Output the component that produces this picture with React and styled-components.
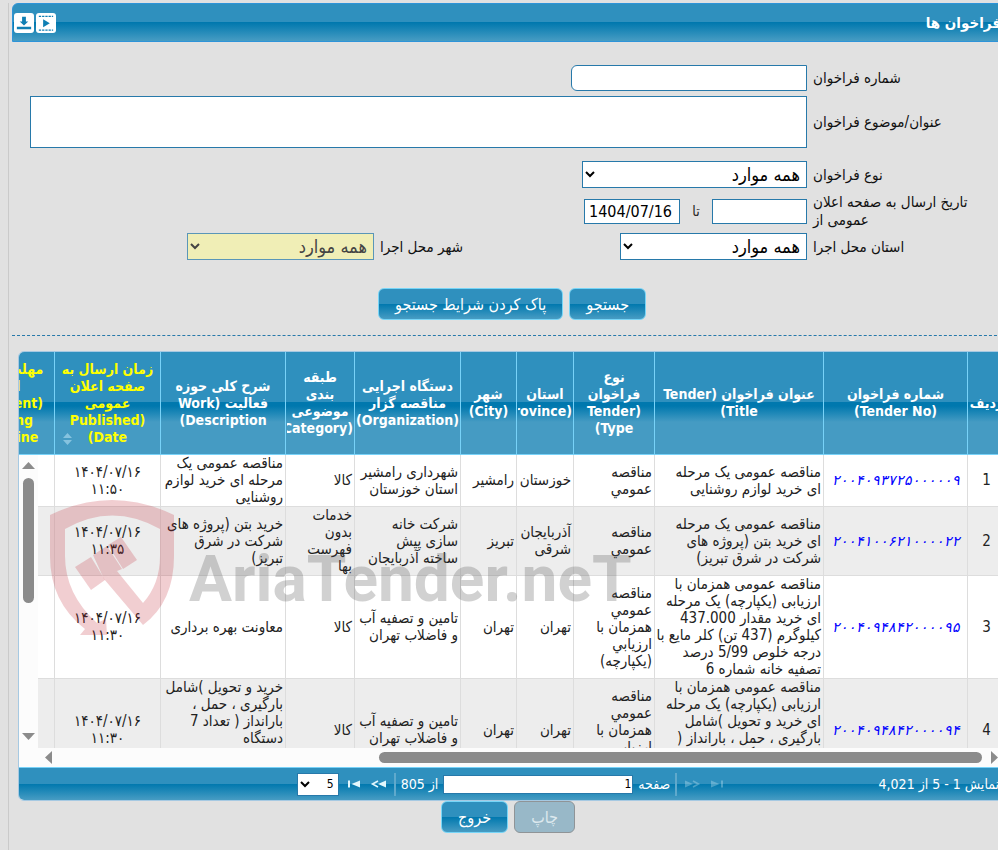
// App.jsx
import React from 'react';
import styled, { createGlobalStyle, css } from 'styled-components';

const GlobalStyle = createGlobalStyle`
  *, *::before, *::after {
    box-sizing: border-box;
  }

  body {
    margin: 0;
    overflow: hidden;
    background: #e1e1e1;
    color: #222;
    font-family: Tahoma, 'DejaVu Sans Condensed', 'DejaVu Sans', sans-serif;
    font-size: 14px;
    line-height: 18px;
  }

  button, input, select, textarea {
    font-family: inherit;
  }
`;

const gloss = 'linear-gradient(#2f90be 0, #2f90be 50%, #0078ae 50%, #479cc3 100%)';

const Frame = styled.main`
  min-height: 100vh;
  margin: 3px -14px 0 8px;
  padding-left: 3px;
  border-left: 1px solid #cacaca;
`;

const TitleBar = styled.header`
  display: flex;
  align-items: center;
  justify-content: space-between;
  height: 39px;
  padding: 0 10px 0 1px;
  border: 1px solid #2e94d9;
  border-radius: 6px 6px 0 0;
  background: ${gloss};
`;

const Title = styled.h1`
  margin: 0;
  color: #fff;
  font-size: 15px;
  line-height: 32px;
`;

const TitleTools = styled.div`
  display: flex;
  gap: 2px;
`;

const ToolButton = styled.button`
  width: 20px;
  height: 20px;
  padding: 0;
  border: 0;
  border-radius: 3px;
  background: #fff;
  line-height: 0;
  cursor: pointer;
`;

const Form = styled.form`
  display: flex;
  flex-direction: column;
  padding: 23px 30px 0 18px;
`;

const FormRow = styled.div`
  display: flex;
  align-items: center;
  min-height: ${({ $height }) => $height || 26}px;
  margin-bottom: ${({ $gap }) => $gap || 5}px;
`;

const Label = styled.label`
  flex: none;
  width: ${({ $width }) => $width || 175}px;
  padding-left: 6px;
  color: #111;
  font-size: 15px;
  text-align: left;
  white-space: pre;
`;

const fieldBox = css`
  margin: 0;
  border: 1px solid #2779aa;
  border-radius: 0;
  background: #fff;
  color: #000;
`;

const TextField = styled.input`
  ${fieldBox}
  width: ${({ $width }) => $width}px;
  height: ${({ $height }) => $height || 26}px;
  padding: 0 4px;
  border-radius: ${({ $rounded }) => ($rounded ? '6px 0 0 6px' : 0)};
  font-size: 16px;
`;

const TextArea = styled.textarea`
  ${fieldBox}
  flex: 1;
  height: 52px;
  resize: none;
`;

const Select = styled.select`
  ${fieldBox}
  width: ${({ $width }) => $width}px;
  height: 27px;
  padding: 0 2px;
  font-size: 18px;

  &:disabled {
    border-color: #5a96b8;
    background: #f0eeb6;
    color: #444;
    opacity: 1;
  }
`;

const Separator = styled.span`
  width: 32px;
  text-align: center;
`;

const Buttons = styled.div`
  display: flex;
  justify-content: center;
  gap: 6px;
`;

const Button = styled.button`
  height: 32px;
  padding: 0 16px;
  border: 1px solid #77d5f7;
  border-radius: 6px;
  background: ${gloss};
  color: #fff;
  font-size: 16px;
  cursor: pointer;

  &:disabled {
    border-color: #8f9497;
    background: #98b8c8;
    color: #dce8ee;
    cursor: default;
  }
`;

const SearchButtons = styled(Buttons)`
  margin: 23px 0 15px;
  padding-left: 12px;
`;

const Divider = styled.hr`
  margin: 0;
  border: 0;
  border-top: 1px dashed #2779aa;
`;

const Grid = styled.section`
  position: relative;
  margin: 15px 6px 0 6px;
  border: 1px solid #a6c9e2;
  border-radius: 6px;
  background: #fcfdfd;
  overflow: hidden;
`;

const TableClip = styled.div`
  position: relative;
  height: 396px;
  overflow: hidden;
`;

const Table = styled.table`
  width: 1052px;
  table-layout: fixed;
  border-collapse: separate;
  border-spacing: 0;
  line-height: 17px;
`;

const HeadCell = styled.th`
  position: relative;
  height: 103px;
  padding: 0 1px;
  border-left: 1px solid #78d2f8;
  border-bottom: 1px solid #78d2f8;
  background: linear-gradient(#2f90be 0, #2f90be 50px, #0078ae 50px, #0078ae 54px, #459bc3 70px);
  color: ${({ $sortable }) => ($sortable ? '#ff0' : '#fff')};
  font-size: 14px;
  text-align: center;
`;

const HeadText = styled.div`
  overflow: hidden;
  white-space: pre;
`;

const SortIcon = styled.svg`
  position: absolute;
  left: 7px;
  bottom: 8px;
`;

const Row = styled.tr`
  background: ${({ $even }) => ($even ? '#ededed' : '#fff')};
`;

const Cell = styled.td`
  padding: 0 2px;
  border-left: 1px solid #ddd;
  border-bottom: 1px solid #ddd;
  font-size: 15px;
  text-align: ${({ $center }) => ($center ? 'center' : 'right')};
  white-space: pre;
  overflow: hidden;
`;

const TenderLink = styled.a`
  color: #00f;
  font-size: 14px;
  font-style: italic;
  text-decoration: none;
`;

const VerticalBar = styled.div`
  position: absolute;
  left: 0;
  top: 103px;
  bottom: 0;
  width: 19px;
  display: flex;
  flex-direction: column;
  align-items: center;
  padding: 7px 0 8px;
  background: #fcfcfc;
`;

const VerticalTrack = styled.div`
  flex: 1;
  width: 11px;
  padding-top: 9px;
`;

const VerticalThumb = styled.div`
  height: 49%;
  border-radius: 6px;
  background: #8b8b8b;
`;

const HorizontalBar = styled.div`
  display: flex;
  align-items: center;
  justify-content: space-between;
  height: 19px;
  padding: 0 7px 0 26px;
  background: #fcfcfc;
`;

const HorizontalTrack = styled.div`
  flex: 1;
  padding: 0 9px;
`;

const HorizontalThumb = styled.div`
  width: 65.5%;
  height: 11px;
  border-radius: 6px;
  background: #8b8b8b;
`;

const Watermark = styled.svg`
  position: absolute;
  left: 30px;
  top: 142px;
  pointer-events: none;
`;

const Pager = styled.footer`
  display: grid;
  grid-template-columns: 1fr auto 1fr;
  align-items: center;
  height: 33px;
  padding: 0 6px;
  border-top: 1px solid #78d2f8;
  background: ${gloss};
  color: #fff;
`;

const PagerControls = styled.div`
  display: flex;
  align-items: center;
  gap: 5px;
`;

const PagerButton = styled.button`
  width: 20px;
  height: 20px;
  padding: 0;
  border: 0;
  background: none;
  line-height: 0;
  opacity: ${({ disabled }) => (disabled ? 0.3 : 1)};
`;

const PagerRule = styled.span`
  width: 2px;
  height: 23px;
  background: #5fa9cc;
`;

const PageInput = styled.input`
  ${fieldBox}
  width: 190px;
  height: 19px;
  padding: 0 1px;
  font-size: 12px;
`;

const PageSize = styled.select`
  ${fieldBox}
  width: 42px;
  height: 23px;
  font-size: 12px;
`;

const FooterButtons = styled(Buttons)`
  padding-left: 0;
  padding-right: 8px;
`;

const columns = [
  { key: 'index', title: 'ردیف', width: 38 },
  { key: 'number', title: 'شماره فراخوان\n(Tender No)', width: 144 },
  { key: 'title', title: 'عنوان فراخوان (Tender\nTitle)', width: 169 },
  { key: 'type', title: 'نوع\nفراخوان\n(Tender\nType)', width: 81 },
  { key: 'province', title: 'استان\n(Province)', width: 57 },
  { key: 'city', title: 'شهر\n(City)', width: 56 },
  { key: 'organization', title: 'دستگاه اجرایی\nمناقصه گزار\n(Organization)', width: 106 },
  { key: 'category', title: 'طبقه\nبندی\nموضوعی\n(Category)', width: 69 },
  { key: 'work', title: 'شرح کلی حوزه\nفعالیت (Work\nDescription)', width: 125 },
  { key: 'published', title: 'زمان ارسال به\nصفحه اعلان\nعمومی\n(Published\nDate)', width: 106, sortable: true },
  { key: 'deadline', title: 'مهلت ارسال\nاسناد\n(Document\nSending\nDeadline)', width: 101, sortable: true },
];

const centered = ['index', 'number', 'published', 'deadline'];

const rows = [
  {
    index: '1',
    number: '۲۰۰۴۰۹۳۷۲۵۰۰۰۰۰۹',
    title: 'مناقصه عمومی یک مرحله\nای خرید لوازم روشنایی',
    type: 'مناقصه\nعمومي',
    province: 'خوزستان',
    city: 'رامشیر',
    organization: 'شهرداری رامشیر\nاستان خوزستان',
    category: 'کالا',
    work: 'مناقصه عمومی یک\nمرحله ای خرید لوازم\nروشنایی',
    published: '۱۴۰۴/۰۷/۱۶\n۱۱:۵۰',
    deadline: '۱۴۰۴/۰۷/۲۳\n۱۴:۰۰',
  },
  {
    index: '2',
    number: '۲۰۰۴۱۰۰۶۲۱۰۰۰۰۲۲',
    title: 'مناقصه عمومی یک مرحله\nای خرید بتن (پروژه های\nشرکت در شرق تبریز)',
    type: 'مناقصه\nعمومي',
    province: 'آذربایجان\nشرقی',
    city: 'تبریز',
    organization: 'شرکت خانه\nسازی پیش\nساخته آذربایجان',
    category: 'خدمات\nبدون\nفهرست\nبها',
    work: 'خرید بتن (پروژه های\nشرکت در شرق\nتبریز)',
    published: '۱۴۰۴/۰۷/۱۶\n۱۱:۳۵',
    deadline: '۱۴۰۴/۰۷/۲۰\n۱۴:۰۰',
  },
  {
    index: '3',
    number: '۲۰۰۴۰۹۴۸۴۲۰۰۰۰۹۵',
    title:
      'مناقصه عمومی همزمان با\nارزیابی (یکپارچه) یک مرحله\nای خرید مقدار 437.000\nکیلوگرم (437 تن) کلر مایع با\nدرجه خلوص 5/99 درصد\nتصفیه خانه شماره 6',
    type: 'مناقصه\nعمومي\nهمزمان با\nارزيابي\n(يكپارچه)',
    province: 'تهران',
    city: 'تهران',
    organization: 'تامین و تصفیه آب\nو فاضلاب تهران',
    category: 'کالا',
    work: 'معاونت بهره برداری',
    published: '۱۴۰۴/۰۷/۱۶\n۱۱:۳۰',
    deadline: '۱۴۰۴/۰۷/۲۶\n۱۴:۰۰',
  },
  {
    index: '4',
    number: '۲۰۰۴۰۹۴۸۴۲۰۰۰۰۹۴',
    title:
      'مناقصه عمومی همزمان با\nارزیابی (یکپارچه) یک مرحله\nای خرید و تحویل )شامل\nبارگیری ، حمل ، بارانداز (\nتعداد 7 دستگاه\nالکتروپمپ',
    type: 'مناقصه\nعمومي\nهمزمان با\nارزيابي\n(يكپارچه)',
    province: 'تهران',
    city: 'تهران',
    organization: 'تامین و تصفیه آب\nو فاضلاب تهران',
    category: 'کالا',
    work: 'خرید و تحویل )شامل\nبارگیری ، حمل ،\nبارانداز ( تعداد 7\nدستگاه\nالکتروپمپ\nشناور',
    published: '۱۴۰۴/۰۷/۱۶\n۱۱:۳۰',
    deadline: '۱۴۰۴/۰۷/۲۳\n۱۴:۰۰',
  },
];

const Arrow = ({ points, width, height }) => (
  <svg width={width} height={height} viewBox={`0 0 ${width} ${height}`}>
    <polygon points={points} fill="#8b8b8b" />
  </svg>
);

const PagerIcon = ({ double, flip }) => (
  <svg width="20" height="20" viewBox="0 0 20 20">
    <g transform={flip ? 'translate(20 0) scale(-1 1)' : undefined}>
      {double ? (
        <>
          <path d="M9 7 L3.5 10 L9 13" fill="none" stroke="#e2f7fd" strokeWidth="1.6" />
          <path d="M17 6.5 V13.5 L9 10 Z" fill="#e2f7fd" />
        </>
      ) : (
        <>
          <path d="M4 6.5 H6 V13.5 H4 Z" fill="#e2f7fd" />
          <path d="M16 6.5 V13.5 L7.5 10 Z" fill="#e2f7fd" />
        </>
      )}
    </g>
  </svg>
);

// shield with a gavel, then the site name
const BrandMark = () => (
  <Watermark width="640" height="150" viewBox="0 0 640 150" aria-hidden="true">
    <g fill="#c0202c" fillOpacity="0.22">
      <path d="M1 21 Q63 -9 125 21 V62 Q125 108 94 131 L55 85 L68 77 L94 109 Q111 90 111 62 V35 Q63 8 16 35 V62 Q16 100 48 129 L57 125 L58 141 L31 141 L36 135 Q1 108 1 62 Z" />
      <path d="M26 73 L42 63 L56 86 L42 96 Z" />
      <path d="M44 61 L58 52 L73 75 L68 77 L55 85 Z" />
      <path d="M59 51 L72 43 L88 66 L74 75 Z" />
    </g>
    <text
      x="140"
      y="107"
      direction="ltr"
      fill="#555"
      fillOpacity="0.27"
      fontFamily="Roboto, sans-serif"
      fontSize="64"
      fontWeight="700"
    >
      AriaTender.neT
    </text>
  </Watermark>
);

const SearchForm = () => (
  <Form onSubmit={(e) => e.preventDefault()}>
    <FormRow>
      <Label htmlFor="number">شماره فراخوان</Label>
      <TextField id="number" $width={236} $rounded />
    </FormRow>
    <FormRow $height={52} $gap={13}>
      <Label htmlFor="subject">عنوان/موضوع فراخوان</Label>
      <TextArea id="subject" />
    </FormRow>
    <FormRow>
      <Label htmlFor="type">نوع فراخوان</Label>
      <Select id="type" $width={225}>
        <option>همه موارد</option>
      </Select>
    </FormRow>
    <FormRow $height={36} $gap={4}>
      <Label htmlFor="from">{'تاریخ ارسال به صفحه اعلان\nعمومی از'}</Label>
      <TextField id="from" $width={95} $height={25} />
      <Separator as="label" htmlFor="to">تا</Separator>
      <TextField id="to" dir="ltr" defaultValue="1404/07/16" $width={96} $height={25} />
    </FormRow>
    <FormRow>
      <Label htmlFor="province">استان محل اجرا</Label>
      <Select id="province" $width={187}>
        <option>همه موارد</option>
      </Select>
      <Label htmlFor="city" $width={246}>شهر محل اجرا</Label>
      <Select id="city" $width={187} disabled>
        <option>همه موارد</option>
      </Select>
    </FormRow>
    <SearchButtons>
      <Button type="submit">جستجو</Button>
      <Button type="reset">پاک کردن شرایط جستجو</Button>
    </SearchButtons>
  </Form>
);

const TenderTable = () => (
  <Table>
    <colgroup>
      {columns.map((col) => (
        <col key={col.key} width={col.width} />
      ))}
    </colgroup>
    <thead>
      <tr>
        {columns.map((col) => (
          <HeadCell key={col.key} $sortable={col.sortable}>
            <HeadText>{col.title}</HeadText>
            {col.sortable && (
              <SortIcon width="11" height="14" viewBox="0 0 11 14">
                <path d="M1 6 L5.5 1 L10 6 Z M1 8 L5.5 13 L10 8 Z" fill="#86c3df" />
              </SortIcon>
            )}
          </HeadCell>
        ))}
      </tr>
    </thead>
    <tbody>
      {rows.map((row, i) => (
        <Row key={row.number} $even={i % 2 === 1}>
          {columns.map(({ key }) => (
            <Cell key={key} $center={centered.includes(key)}>
              {key === 'number' ? <TenderLink href="#tender">{row[key]}</TenderLink> : row[key]}
            </Cell>
          ))}
        </Row>
      ))}
    </tbody>
  </Table>
);

const App = () => {
  return (
    <>
      <GlobalStyle />
      <Frame dir="rtl">
        <TitleBar>
          <Title>فراخوان ها</Title>
          <TitleTools>
            <ToolButton aria-label="نمایش">
              <svg width="20" height="20" viewBox="0 0 21 21">
                <path d="M3 3.5 H18 M3 18 H18" stroke="#0f7fb4" strokeWidth="1.4" strokeDasharray="2.4 1" />
                <path d="M7.5 6.5 V15 L14.5 10.7 Z" fill="#0f7fb4" />
              </svg>
            </ToolButton>
            <ToolButton aria-label="دریافت">
              <svg width="20" height="20" viewBox="0 0 21 21">
                <path d="M8.5 4 H12.5 V9 H15 L10.5 13 L6 9 H8.5 Z M3 14.5 H18 V17 H3 Z" fill="#0f7fb4" />
              </svg>
            </ToolButton>
          </TitleTools>
        </TitleBar>

        <SearchForm />
        <Divider />

        <Grid>
          <TableClip>
            <TenderTable />
            <VerticalBar>
              <Arrow width={13} height={7} points="0,7 13,7 6.5,0" />
              <VerticalTrack>
                <VerticalThumb />
              </VerticalTrack>
              <Arrow width={13} height={7} points="0,0 13,0 6.5,7" />
            </VerticalBar>
          </TableClip>
          <BrandMark />
          <HorizontalBar>
            <Arrow width={7} height={13} points="0,0 0,13 7,6.5" />
            <HorizontalTrack>
              <HorizontalThumb />
            </HorizontalTrack>
            <Arrow width={7} height={13} points="7,0 7,13 0,6.5" />
          </HorizontalBar>
          <Pager>
            <span>نمایش 1 - 5 از 4,021</span>
            <PagerControls>
              <PagerButton disabled aria-label="اولین صفحه">
                <PagerIcon flip />
              </PagerButton>
              <PagerButton disabled aria-label="صفحه قبل">
                <PagerIcon double flip />
              </PagerButton>
              <PagerRule />
              <label htmlFor="page">صفحه</label>
              <PageInput id="page" defaultValue="1" />
              <span>از 805</span>
              <PagerRule />
              <PagerButton aria-label="صفحه بعد">
                <PagerIcon double />
              </PagerButton>
              <PagerButton aria-label="آخرین صفحه">
                <PagerIcon />
              </PagerButton>
              <PageSize aria-label="تعداد در صفحه">
                <option>5</option>
              </PageSize>
            </PagerControls>
          </Pager>
        </Grid>

        <FooterButtons>
          <Button disabled>چاپ</Button>
          <Button>خروج</Button>
        </FooterButtons>
      </Frame>
    </>
  );
};

export default App;
